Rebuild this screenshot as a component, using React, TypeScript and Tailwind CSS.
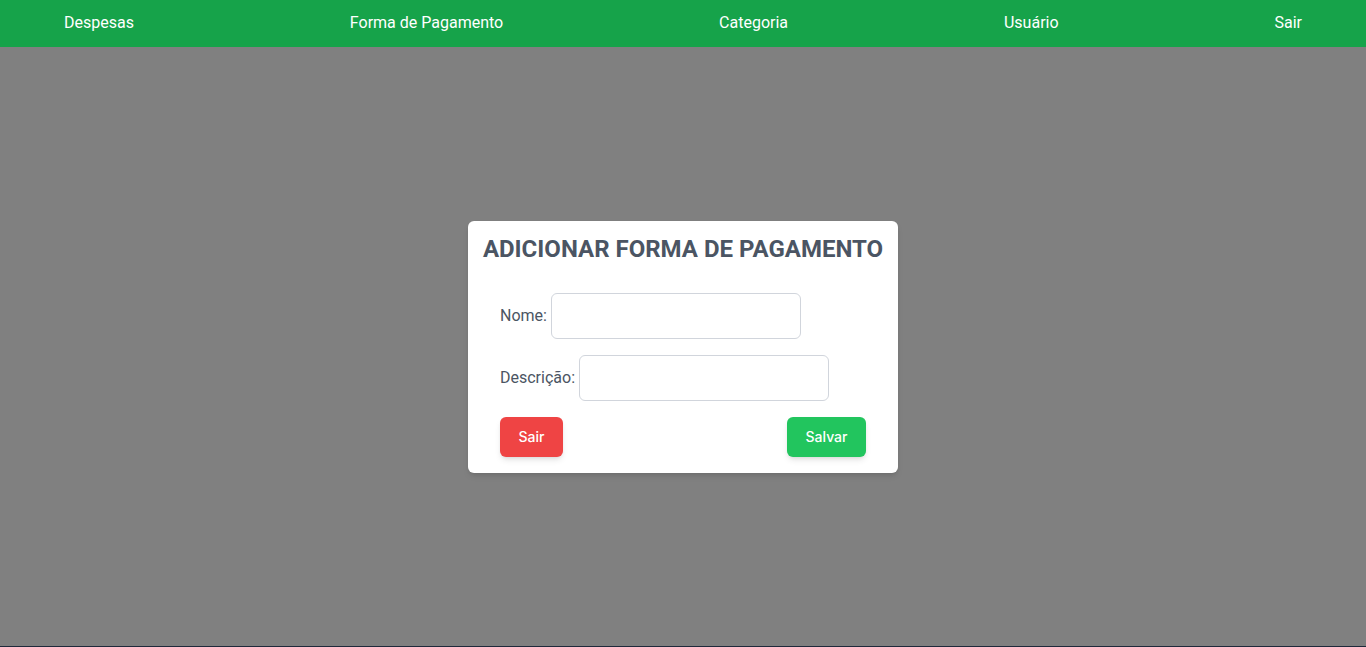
import React from "react";

export default function App() {
  const items = ["Despesas", "Forma de Pagamento", "Categoria", "Usuário", "Sair"];
  return (
    <div className="h-[647px] w-full flex flex-col font-['Roboto',sans-serif]">
      <nav className="h-[47px] shrink-0 bg-[#16a34a] flex items-center justify-between px-16 pb-0.5 text-white text-base">
        {items.map((t) => (
          <a key={t} className="leading-none">{t}</a>
        ))}
      </nav>
      <main className="flex-1 bg-[#808080] flex items-center justify-center">
        <div className="w-[430px] h-[252px] bg-white rounded-md shadow-md px-4 pt-3 pb-4 flex flex-col">
          <h1 className="text-2xl leading-8 font-bold text-[#4b5563] text-center whitespace-nowrap -mx-4">
            ADICIONAR FORMA DE PAGAMENTO
          </h1>
          <div className="mt-7 px-4 flex flex-col gap-4">
            <div className="flex items-center gap-1">
              <label className="text-base text-[#4b5563]">Nome:</label>
              <input className="w-[250px] h-[46px] border border-gray-300 rounded-md outline-none px-2" />
            </div>
            <div className="flex items-center gap-1">
              <label className="text-base text-[#4b5563]">Descrição:</label>
              <input className="w-[250px] h-[46px] border border-gray-300 rounded-md outline-none px-2" />
            </div>
            <div className="flex items-center justify-between">
              <button className="w-[63px] h-10 rounded-md bg-[#ef4444] text-white text-sm font-['Inter',sans-serif] font-medium shadow-md">
                Sair
              </button>
              <button className="w-[79px] h-10 rounded-md bg-[#22c55e] text-white text-sm font-['Inter',sans-serif] font-medium shadow-md">
                Salvar
              </button>
            </div>
          </div>
        </div>
      </main>
      <div className="h-px bg-[#1e293b] shrink-0" />
    </div>
  );
}
